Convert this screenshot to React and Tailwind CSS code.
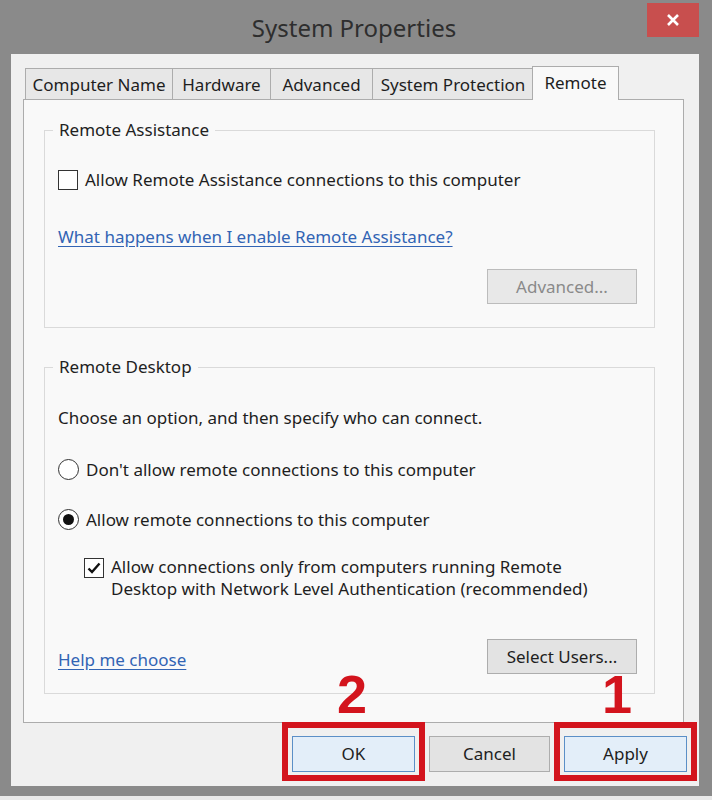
import React from 'react';

const font = { fontFamily: '"Noto Sans", "Open Sans", sans-serif' };

const tabs = [
  { label: 'Computer Name', w: 'w-[147px]' },
  { label: 'Hardware', w: 'w-[98px]' },
  { label: 'Advanced', w: 'w-[102px]' },
  { label: 'System Protection', w: 'w-[161px]' },
];

const CheckBox = ({ checked }) => (
  <span className="flex h-[20px] w-[20px] shrink-0 items-center justify-center border border-[#333] bg-white">
    {checked && (
      <svg width="16" height="16" viewBox="0 0 16 16">
        <path d="M2.5 8.5 L6 12 L13.5 3.5" fill="none" stroke="#111" strokeWidth="2.4" />
      </svg>
    )}
  </span>
);

const Radio = ({ checked }) => (
  <span className="flex h-[21px] w-[21px] shrink-0 items-center justify-center rounded-full border border-[#333] bg-white">
    {checked && <span className="h-[11px] w-[11px] rounded-full bg-[#111]" />}
  </span>
);

const Group = ({ title, children, className }) => (
  <fieldset className={`border border-[#dadada] pl-[13px] pr-[17px] ${className}`}>
    <legend className="-ml-[5px] px-[6px] text-[17px] leading-[20px] text-[#222]">{title}</legend>
    {children}
  </fieldset>
);

const WinButton = ({ children, disabled }) => (
  <button
    className={`flex h-[35px] w-[150px] items-center justify-center border text-[17px] ${
      disabled ? 'border-[#bcbcbc] bg-[#e8e8e8] text-[#8a8a8a]' : 'border-[#adadad] bg-[#e3e3e3] text-[#1e1e1e]'
    }`}
  >
    {children}
  </button>
);

const Marked = ({ num, numClass, children }) => (
  <div className="relative">
    {children}
    <div className="pointer-events-none absolute -left-[10px] -right-[10px] -top-[14px] -bottom-[9px] border-[6px] border-[#d3141d]" />
    <span
      className={`pointer-events-none absolute top-[-69px] text-[54px] font-bold leading-none text-[#d3141d] ${numClass}`}
      style={{ fontFamily: '"Liberation Sans", Arial, sans-serif' }}
    >
      {num}
    </span>
  </div>
);

export default function App() {
  return (
    <div className="h-[800px] w-[712px] bg-[#e9e9e9]" style={font}>
      <div className="flex h-[796px] flex-col bg-[#8a8a8a] pl-[11px] pr-[13px] pb-[10px]">
        {/* title bar */}
        <div className="relative flex h-[54px] shrink-0 items-center justify-center">
          <span className="-ml-[2px] pt-[2px] text-[24px] text-[#2e2e2e]">System Properties</span>
          <div className="absolute right-[0px] top-[3px] flex h-[34px] w-[52px] items-center justify-center bg-[#c84f4e]">
            <svg width="14" height="14" viewBox="0 0 14 14">
              <path d="M2 2 L12 12 M12 2 L2 12" stroke="#fff" strokeWidth="2.6" />
            </svg>
          </div>
        </div>

        {/* client area */}
        <div className="flex flex-1 flex-col bg-[#f0f0f0] pl-[12px] pr-[15px] pt-[12px]">
          <div className="ml-[2px] flex items-end">
            {tabs.map((t) => (
              <div
                key={t.label}
                className={`flex h-[31px] ${t.w} items-center justify-center border border-b-0 border-r-0 border-[#acacac] bg-[#e7e7e7] pt-[1px] text-[17px] text-[#1e1e1e]`}
              >
                {t.label}
              </div>
            ))}
            <div className="relative z-10 -mb-px -ml-px flex h-[34px] w-[87px] items-start justify-center border border-b-0 border-[#acacac] bg-[#f9f9f9] pt-[3px] text-[17px] text-[#1e1e1e]">
              Remote
            </div>
          </div>

          <div className="border border-[#acacac] bg-[#f9f9f9] pl-[20px] pr-[28px] pb-[28px] pt-[20px]">
            <Group title="Remote Assistance" className="pb-[23px]">
              <div className="mt-[30px] flex items-center gap-[7px] text-[17px] leading-[20px] text-[#1e1e1e]">
                <CheckBox />
                <span>Allow Remote Assistance connections to this computer</span>
              </div>
              <div className="mt-[37px] text-[17px] leading-[20px] text-[#3264b4] underline underline-offset-[3px]">
                What happens when I enable Remote Assistance?
              </div>
              <div className="mt-[22px] flex justify-end">
                <WinButton disabled>Advanced...</WinButton>
              </div>
            </Group>

            <Group title="Remote Desktop" className="mt-[29px] pb-[19px]">
              <div className="mt-[31px] text-[17px] leading-[20px] text-[#1e1e1e]">
                Choose an option, and then specify who can connect.
              </div>
              <div className="mt-[31px] flex items-center gap-[7px] text-[17px] leading-[20px] text-[#1e1e1e]">
                <Radio />
                <span>Don't allow remote connections to this computer</span>
              </div>
              <div className="mt-[29px] flex items-center gap-[7px] text-[17px] leading-[20px] text-[#1e1e1e]">
                <Radio checked />
                <span>Allow remote connections to this computer</span>
              </div>
              <div className="ml-[26px] mt-[26px] flex items-start gap-[7px] text-[17px] leading-[22px] text-[#1e1e1e]">
                <span className="mt-[2px]">
                  <CheckBox checked />
                </span>
                <span>
                  Allow connections only from computers running Remote
                  <br />
                  Desktop with Network Level Authentication (recommended)
                </span>
              </div>
              <div className="mt-[39px] flex items-center justify-between">
                <span className="mt-[6px] text-[17px] leading-[20px] text-[#3264b4] underline underline-offset-[3px]">
                  Help me choose
                </span>
                <WinButton>Select Users...</WinButton>
              </div>
            </Group>
          </div>

          {/* dialog buttons */}
          <div className="mt-[13px] flex justify-end gap-[14px]">
            <Marked num="2" numClass="left-[45px]">
              <button className="flex h-[36px] w-[123px] items-center justify-center border border-[#5b8fc7] bg-[#e3eef9] text-[17px] text-[#1e1e1e]">
                OK
              </button>
            </Marked>
            <button className="flex h-[36px] w-[121px] items-center justify-center border border-[#adadad] bg-[#e3e3e3] text-[17px] text-[#1e1e1e]">
              Cancel
            </button>
            <div className="-mr-[3px]">
              <Marked num="1" numClass="left-[38px]">
                <button className="flex h-[36px] w-[123px] items-center justify-center border border-[#5b8fc7] bg-[#e3eef9] text-[17px] text-[#1e1e1e]">
                  Apply
                </button>
              </Marked>
            </div>
          </div>
        </div>
      </div>
    </div>
  );
}
